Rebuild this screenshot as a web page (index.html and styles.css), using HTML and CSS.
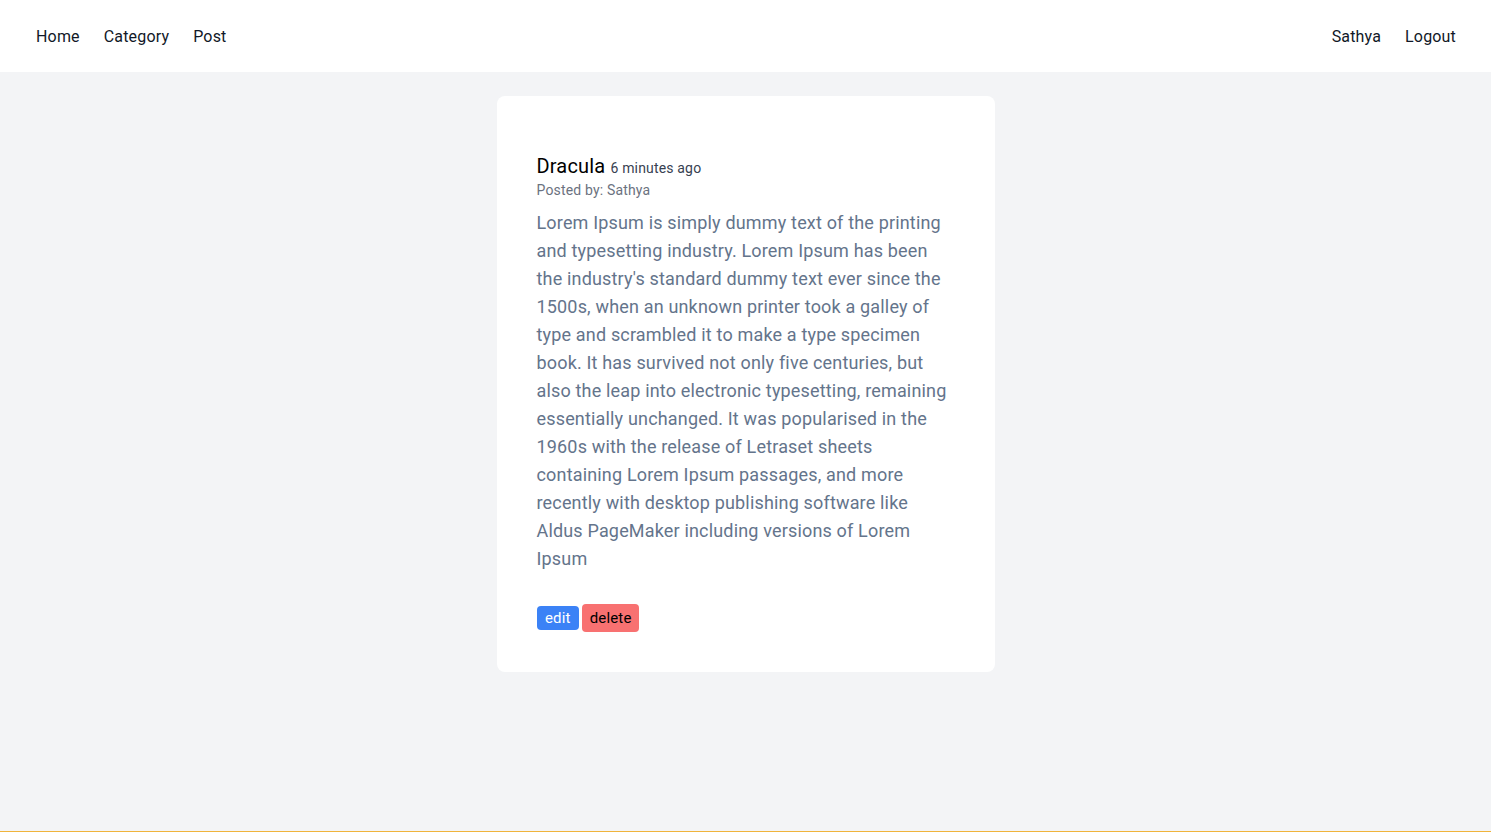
FILE: index.html
```html
<!DOCTYPE html>
<html lang="en">
<head>
<meta charset="utf-8">
<title>Post</title>
<link rel="stylesheet" href="styles.css">
</head>
<body>
<nav class="nav">
  <div class="nav-group">
    <a class="nav-link" href="#">Home</a>
    <a class="nav-link" href="#">Category</a>
    <a class="nav-link" href="#">Post</a>
  </div>
  <div class="nav-group">
    <a class="nav-link" href="#">Sathya</a>
    <a class="nav-link" href="#">Logout</a>
  </div>
</nav>
<main class="main">
  <article class="card">
    <h2 class="title">Dracula <span class="time">6 minutes ago</span></h2>
    <p class="author">Posted by: Sathya</p>
    <p class="body">Lorem Ipsum is simply dummy text of the printing and typesetting industry. Lorem Ipsum has been the industry's standard dummy text ever since the 1500s, when an unknown printer took a galley of type and scrambled it to make a type specimen book. It has survived not only five centuries, but also the leap into electronic typesetting, remaining essentially unchanged. It was popularised in the 1960s with the release of Letraset sheets containing Lorem Ipsum passages, and more recently with desktop publishing software like Aldus PageMaker including versions of Lorem Ipsum</p>
    <div class="actions">
      <button class="btn btn-edit">edit</button>
      <button class="btn btn-delete">delete</button>
    </div>
  </article>
</main>
<div class="footer-line"></div>
</body>
</html>
```
FILE: styles.css
```css
* { box-sizing: border-box; }
html, body { margin: 0; padding: 0; height: 100%; }
body {
  font-family: Roboto, "Liberation Sans", sans-serif;
  letter-spacing: 0.17px;
  background: #f3f4f6;
  color: #111827;
  display: flex;
  flex-direction: column;
}
.nav {
  height: 72px;
  background: #fff;
  display: flex;
  align-items: center;
  justify-content: space-between;
  padding: 2px 35px 0 36px;
  flex-shrink: 0;
}
.nav-group { display: flex; gap: 24px; }
.nav-link {
  color: #111827;
  text-decoration: none;
  font-size: 16px;
  line-height: 24px;
}
.main {
  flex: 1;
  display: flex;
  justify-content: center;
  align-items: flex-start;
  padding-top: 24px;
}
.card {
  width: 498px;
  background: #fff;
  border-radius: 8px;
  padding: 56px 40px 40px;
}
.title {
  margin: 0;
  font-size: 20px;
  line-height: 28px;
  font-weight: 400;
  color: #000;
}
.time {
  font-size: 14px;
  color: #374151;
}
.author {
  margin: -2px 0 0;
  font-size: 14px;
  line-height: 20px;
  color: #6b7280;
}
.body {
  margin: 9px 0 0;
  font-size: 18px;
  line-height: 28px;
  color: #64748b;
}
.actions {
  margin-top: 31px;
  display: flex;
  align-items: center;
  gap: 3px;
}
.btn {
  font-family: inherit;
  letter-spacing: inherit;
  font-size: 15px;
  border: none;
  border-radius: 4px;
  cursor: pointer;
}
.btn-edit {
  background: #3b82f6;
  color: #fff;
  height: 24px;
  padding: 0 8.5px;
}
.btn-delete {
  background: #f87171;
  color: #000;
  height: 28px;
  padding: 0 7.5px;
}
.footer-line {
  height: 1px;
  background: #f0b43c;
  flex-shrink: 0;
}
```
